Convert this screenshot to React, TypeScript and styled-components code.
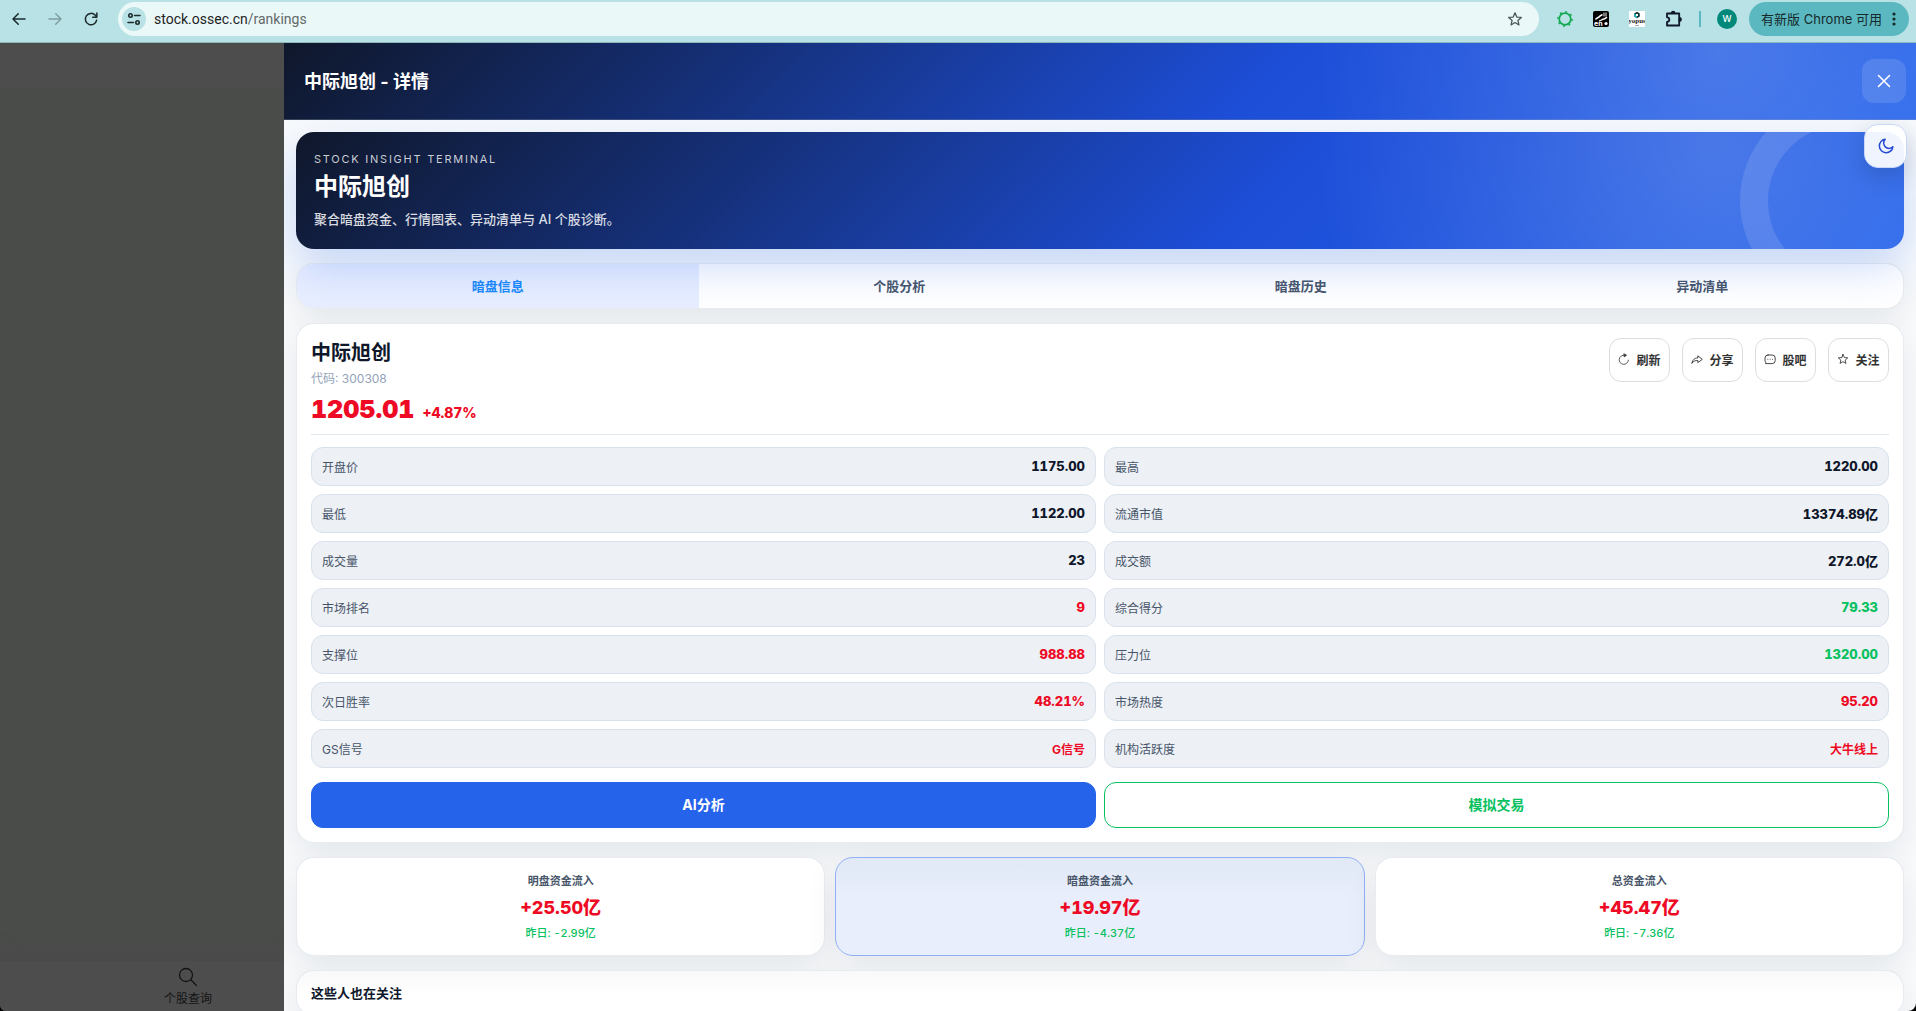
import React from "react";
import styled, { createGlobalStyle, css } from "styled-components";

const ui = `Inter, "Noto Sans CJK SC", sans-serif`;

const Global = createGlobalStyle`
  *, *::after { box-sizing: border-box; }
  html, body, #root { height: 100%; }
  body { margin: 0; font-family: ${ui}; color: #0f172a; overflow: hidden; background: #000; }
  button, input { font-family: inherit; }
  button { cursor: pointer; }
  svg { display: block; flex: none; }
  h1, h2, h3, p, dl, dd, dt { margin: 0; }
`;

const Window = styled.div`
  display: flex;
  flex-direction: column;
  height: 100vh;
`;

/* ---------- browser bar ---------- */

const Toolbar = styled.header`
  display: flex;
  align-items: center;
  height: 43px;
  padding: 2px 7px 7px 10px;
  background: #b8e2e5;
  border-bottom: 1px solid #8fb8ba;
`;

const ToolButton = styled.button<{ $dim?: boolean }>`
  display: grid;
  place-items: center;
  width: 18px;
  height: 18px;
  margin-right: 18px;
  padding: 0;
  border: 0;
  background: none;
  color: ${(p) => (p.$dim ? "#7f9fa2" : "#1d2b2c")};
`;

const AddressBar = styled.div`
  display: flex;
  flex: 1;
  align-items: center;
  height: 34px;
  margin-right: 18px;
  padding: 0 16px 0 4px;
  border-radius: 17px;
  background: #ebf8f8;
  color: #4a5556;
`;

const SiteInfo = styled.span`
  display: grid;
  place-items: center;
  width: 24px;
  height: 24px;
  border-radius: 50%;
  background: #b8e2e5;
  color: #1d2b2c;
`;

const Address = styled.span`
  flex: 1;
  margin-left: 8px;
  font: 14px/20px Roboto, sans-serif;
  color: #62696a;

  b {
    font-weight: 400;
    color: #1d2324;
  }
`;

const Extensions = styled.div`
  display: flex;
  align-items: center;
  gap: 20px;
  margin-right: 12px;
`;

const Divider = styled.span`
  width: 2px;
  height: 16px;
  margin: 0 -4px;
  background: #5bb8c0;
`;

const Avatar = styled.span`
  display: grid;
  place-items: center;
  width: 20px;
  height: 20px;
  border-radius: 50%;
  background: #00897b;
  color: #fff;
  font-size: 9px;
  font-weight: 500;
`;

const UpdateButton = styled.button`
  display: flex;
  align-items: center;
  gap: 6px;
  height: 34px;
  padding: 0 9px 0 12px;
  border: 0;
  border-radius: 17px;
  background: #5bb8c0;
  color: #16292b;
  font-size: 13px;
  white-space: nowrap;
`;

/* ---------- page ---------- */

const Viewport = styled.div`
  display: flex;
  flex: 1;
  min-height: 0;
  border-radius: 0 0 8px 6px;
  overflow: hidden;
`;

const Backdrop = styled.aside`
  display: flex;
  flex-direction: column;
  justify-content: flex-end;
  width: 284px;
  padding-top: 45px;
  background: linear-gradient(#4d4d4d 45px, #4a4c4a 45px);
`;

const BottomNav = styled.nav`
  display: flex;
  justify-content: flex-end;
  height: 50px;
  padding: 6px 72px 0;
  background: #4d4d4d;
  box-shadow: 0 -6px 20px rgba(76, 73, 76, 0.8);
`;

const NavLink = styled.a`
  display: flex;
  flex-direction: column;
  align-items: center;
  gap: 3px;
  color: #141414;
  font-size: 12px;
  line-height: 18px;
  text-decoration: none;
`;

const Drawer = styled.main`
  display: flex;
  flex: 1;
  flex-direction: column;
  min-width: 0;
  background: #f8fafc;
`;

const heroPaint = css`
  background:
    radial-gradient(circle at 88% 12%, rgba(255, 255, 255, 0.18), transparent 28%),
    linear-gradient(135deg, #0f172a 0%, #1d4ed8 60%, #2563eb 100%);
  color: #fff;
`;

const DrawerHeader = styled.div`
  display: flex;
  align-items: center;
  justify-content: space-between;
  height: 77px;
  padding: 0 10px 0 20px;
  border-bottom: 1px solid rgba(148, 163, 184, 0.3);
  ${heroPaint}
`;

const DrawerTitle = styled.h2`
  padding-top: 2px;
  font-size: 18px;
  line-height: 28px;
  font-weight: 700;
`;

const CloseButton = styled.button`
  display: grid;
  place-items: center;
  width: 44px;
  height: 44px;
  padding: 0;
  border: 0;
  border-radius: 12px;
  background: rgba(255, 255, 255, 0.12);
  color: #fff;
`;

const Content = styled.div`
  display: flex;
  flex-direction: column;
  gap: 14px;
  flex: 1;
  min-height: 0;
  padding: 12px;
  overflow: hidden;

  > * { flex: none; }
`;

const Hero = styled.section`
  position: relative;
  height: 117px;
  padding: 19px 18px;
  border-radius: 18px;
  box-shadow: 0 18px 44px rgba(37, 99, 235, 0.24);
  ${heroPaint}
`;

const HeroClip = styled.div`
  position: absolute;
  inset: 0;
  border-radius: inherit;
  overflow: hidden;
  pointer-events: none;

  &::after {
    content: "";
    position: absolute;
    top: -35px;
    right: -44px;
    width: 208px;
    height: 208px;
    border: 28px solid rgba(255, 255, 255, 0.12);
    border-radius: 50%;
  }
`;

const Eyebrow = styled.p`
  font-size: 11px;
  line-height: 16px;
  letter-spacing: 0.16em;
  color: rgba(255, 255, 255, 0.78);
`;

const HeroTitle = styled.h1`
  margin-top: 4px;
  font-size: 24px;
  line-height: 32px;
  font-weight: 700;
`;

const HeroText = styled.p`
  margin-top: 6px;
  font-size: 13px;
  line-height: 20px;
  font-weight: 500;
  color: rgba(255, 255, 255, 0.85);
`;

const ThemeButton = styled.button`
  position: absolute;
  top: -8px;
  right: -3px;
  display: grid;
  place-items: center;
  width: 43px;
  height: 44px;
  padding: 0;
  border: 1px solid #c9d8fa;
  border-radius: 14px;
  background: rgba(255, 255, 255, 0.92);
  box-shadow: 0 8px 22px rgba(15, 23, 42, 0.18);
  color: #2549d3;
`;

const cardEdge = css`
  border: 1px solid rgba(148, 163, 184, 0.22);
  border-radius: 18px;
  box-shadow: 0 12px 32px rgba(15, 23, 42, 0.08);
`;

const Tabs = styled.div`
  display: grid;
  grid-template-columns: repeat(4, 1fr);
  height: 46px;
  overflow: hidden;
  background: #fff;
  ${cardEdge}
`;

const Tab = styled.button<{ $active?: boolean }>`
  padding: 0 0 2px;
  border: 0;
  background: ${(p) => (p.$active ? "#e8eeff" : "none")};
  color: ${(p) => (p.$active ? "#1989fa" : "#475569")};
  font-size: 13px;
  font-weight: 700;
`;

const Card = styled.section<{ $shaded?: boolean }>`
  padding: 14px;
  background: ${(p) => (p.$shaded ? "linear-gradient(#f9f9fb, #fff 26px)" : "#fff")};
  ${cardEdge}
`;

const StockHead = styled.div`
  display: flex;
  align-items: flex-start;
  justify-content: space-between;
  height: 97px;
  border-bottom: 1px solid #e2e8f0;
`;

const StockName = styled.h2`
  font-size: 20px;
  line-height: 30px;
  font-weight: 700;
`;

const Code = styled.p`
  font-size: 12px;
  line-height: 22px;
  color: #94a3b8;
`;

const Price = styled.p`
  display: flex;
  align-items: baseline;
  gap: 8px;
  color: #ee0a24;
  font-size: 14px;
  line-height: 38px;
  font-weight: 800;
  font-variant-numeric: tabular-nums;

  strong {
    font-size: 25px;
    font-weight: 900;
  }
`;

const Actions = styled.div`
  display: flex;
  gap: 12px;
`;

const ActionButton = styled.button`
  display: flex;
  align-items: center;
  justify-content: center;
  gap: 6px;
  width: 61px;
  height: 44px;
  padding: 0 0 2px;
  border: 1px solid #dcdee0;
  border-radius: 12px;
  background: #fff;
  color: #323233;
  font-size: 12px;
  font-weight: 700;
`;

const StatGrid = styled.dl`
  display: grid;
  grid-template-columns: 1fr 1fr;
  gap: 8px;
  margin-top: 12px;
`;

type Tone = "ink" | "up" | "down";
const tones: Record<Tone, string> = { ink: "#0f172a", up: "#ee0a24", down: "#07c160" };

const Stat = styled.div<{ $tone: Tone; $word: boolean }>`
  display: flex;
  align-items: center;
  justify-content: space-between;
  height: 39px;
  padding: 0 10px 1px;
  border: 1px solid #d9e2ec;
  border-radius: 12px;
  background: #edf0f5;
  font-size: 12px;

  dt { color: #475569; }
  dd {
    color: ${(p) => tones[p.$tone]};
    font-size: ${(p) => (p.$word ? "12px" : "13px")};
    font-weight: ${(p) => (p.$word ? 700 : 800)};
    font-variant-numeric: tabular-nums;
  }
`;

const ButtonRow = styled.div`
  display: grid;
  grid-template-columns: 1fr 1fr;
  gap: 8px;
  margin-top: 14px;
`;

const MainButton = styled.button<{ $outline?: boolean }>`
  height: 46px;
  padding: 0 0 2px;
  border: 1px solid ${(p) => (p.$outline ? "#07c160" : "#2563eb")};
  border-radius: 12px;
  background: ${(p) => (p.$outline ? "#fff" : "#2563eb")};
  color: ${(p) => (p.$outline ? "#07c160" : "#fff")};
  font-size: 14px;
  font-weight: 700;
`;

const FlowRow = styled.div`
  display: grid;
  grid-template-columns: repeat(3, 1fr);
  gap: 10px;
`;

const Flow = styled.section<{ $active?: boolean }>`
  display: flex;
  flex-direction: column;
  align-items: center;
  height: 99px;
  padding: 14px 0;
  background: #fff;
  ${cardEdge}
  ${(p) =>
    p.$active &&
    css`
      background: linear-gradient(#e1e8f6, #e8eefb 40%);
      border-color: #8fb0f5;
    `}

  h3 {
    font-size: 11px;
    line-height: 18px;
    font-weight: 600;
    color: #475569;
  }
  strong {
    margin: 5px 0;
    font-size: 18px;
    line-height: 26px;
    font-weight: 800;
    font-variant-numeric: tabular-nums;
    color: #ee0a24;
  }
  p {
    font-size: 11px;
    line-height: 14px;
    font-weight: 500;
    font-variant-numeric: tabular-nums;
    color: #07c160;
  }
`;

const CardTitle = styled.h3`
  font-size: 13px;
  line-height: 16px;
  font-weight: 700;
`;

/* ---------- icons ---------- */

type IconProps = { size?: number; width?: number; children: React.ReactNode; box?: number };
const Icon = ({ size = 16, width = 2, box = 24, children }: IconProps) => (
  <svg width={size} height={size} viewBox={`0 0 ${box} ${box}`} fill="none" stroke="currentColor"
    strokeWidth={width} strokeLinecap="round" strokeLinejoin="round" aria-hidden="true">
    {children}
  </svg>
);

const BackIcon = () => <Icon size={18}><path d="M20 12H5M11 5l-7 7 7 7" /></Icon>;
const ForwardIcon = () => <Icon size={18}><path d="M4 12h15M13 5l7 7-7 7" /></Icon>;
const ReloadIcon = () => (
  <Icon size={18}><path d="M19.5 13.5A7.6 7.6 0 1 1 17.5 6.8L19.5 9M19.8 4v5.5h-5.5" /></Icon>
);
const TuneIcon = () => (
  <Icon size={14} box={14} width={1.6}>
    <circle cx="3.5" cy="3.5" r="1.7" /><path d="M7.5 3.5H13M1 10.5h5.5" /><circle cx="10.5" cy="10.5" r="1.7" />
  </Icon>
);
const StarIcon = ({ size, width }: { size: number; width: number }) => (
  <Icon size={size} width={width}>
    <path d="M12 2.800l2.700 6.300 6.800.6-5.200 4.500 1.600 6.700-5.900-3.600-5.900 3.600 1.600-6.700-5.200-4.500 6.800-.6z" />
  </Icon>
);
const GearIcon = () => (
  <svg width="16" height="16" viewBox="0 0 16 16" fill="none" stroke="#12a84f" aria-hidden="true">
    <circle cx="8" cy="8" r="5.8" strokeWidth="1.8" />
    <circle cx="8" cy="8" r="7.2" strokeWidth="1.4" strokeDasharray="1.9 3.755" />
  </svg>
);
const TranslateIcon = () => (
  <svg width="16" height="16" viewBox="0 0 16 16" aria-hidden="true">
    <rect width="16" height="16" rx="2" fill="#000" />
    <path d="M2.5 8.5c1-2 3-1.500 4-3s2-1 3-2M6 10c2 0 3-2 5-2 1 0 2-1 3-2" fill="none" stroke="#fff" strokeWidth="1.5" />
    <rect x="10" y="1.5" width="4" height="4" fill="#777" />
    <circle cx="13" cy="12.5" r="1.6" fill="#fff" />
    <text x="1" y="15" fontSize="7" fontWeight="700" fill="#fff" fontFamily="Inter, sans-serif">en</text>
  </svg>
);
const YapasIcon = () => (
  <svg width="16" height="16" viewBox="0 0 16 16" aria-hidden="true">
    <rect width="16" height="16" fill="#fff" />
    <path d="M8 .8l2.800 1.600v3.200L8 7.200 5.200 5.600V2.400z" fill="#16323a" />
    <path d="M5.200 2.400L8 4v3.200L5.200 5.600z" fill="#27b3b5" />
    <path d="M7 3h2v2H7z" fill="#fff" />
    <text x="8" y="12" fontSize="7" fontWeight="700" textAnchor="middle" fill="#222" fontFamily="Liberation Serif, serif">yopus</text>
    <path d="M6 14.500h4" stroke="#aaa" />
  </svg>
);
const PuzzleIcon = () => (
  <Icon size={18} box={18} width={1.8}>
    <path d="M2 3.500H14.200V15.500H2v-3.600a2.300 2.300 0 0 0 0-4.600z" />
    <path d="M6.600 3.200a1.500 1.500 0 0 1 3 0zM14.500 8a1.500 1.500 0 0 1 0 3z" fill="currentColor" />
  </Icon>
);
const DotsIcon = () => (
  <svg width="12" height="14" viewBox="0 0 12 14" fill="currentColor" aria-hidden="true">
    <circle cx="6" cy="2" r="1.6" /><circle cx="6" cy="7" r="1.6" /><circle cx="6" cy="12" r="1.6" />
  </svg>
);
const CrossIcon = () => <Icon size={14} box={14} width={1.6}><path d="M1.500 1.500l11 11M12.500 1.500l-11 11" /></Icon>;
const MoonIcon = () => (
  <Icon size={16} box={16} width={1.5}>
    <path d="M7.200 1.200A6.800 6.800 0 1 0 14.900 8.800 5 5 0 0 1 7.200 1.200z" />
  </Icon>
);
const SearchIcon = () => (
  <Icon size={20} box={20} width={1.3}><circle cx="8" cy="8" r="6.5" /><path d="M12.800 12.800L18.500 18.500" /></Icon>
);
const RefreshIcon = () => (
  <Icon size={12} box={12} width={0.8}>
    <path d="M10.400 7.200A4.600 4.600 0 1 1 6.500 2.200" /><path d="M6.200 .9L8.500 2.200 6.500 3.700z" fill="currentColor" />
  </Icon>
);
const ShareIcon = () => (
  <Icon size={12} box={12} width={0.9}>
    <path d="M1 10c.5-3.500 2.800-5 5.800-5V2.800L11.300 6.400 6.800 9.600V7.500C4.500 7.300 2.500 8.200 1 10z" />
  </Icon>
);
const ChatIcon = () => (
  <Icon size={12} box={12} width={0.9}>
    <path d="M4 2h4.200a3 3 0 0 1 3 3v2.600a3 3 0 0 1-3 3H1.600c.4-.6.3-1 0-1.600A3 3 0 0 1 1 7.500V5a3 3 0 0 1 3-3z" />
    <path d="M3.800 6.300h.1M6.100 6.300h.1M8.400 6.300h.1" />
  </Icon>
);

/* ---------- data ---------- */

const stats: [string, string, Tone][] = [
  ["开盘价", "1175.00", "ink"],
  ["最高", "1220.00", "ink"],
  ["最低", "1122.00", "ink"],
  ["流通市值", "13374.89亿", "ink"],
  ["成交量", "23", "ink"],
  ["成交额", "272.0亿", "ink"],
  ["市场排名", "9", "up"],
  ["综合得分", "79.33", "down"],
  ["支撑位", "988.88", "up"],
  ["压力位", "1320.00", "down"],
  ["次日胜率", "48.21%", "up"],
  ["市场热度", "95.20", "up"],
  ["GS信号", "G信号", "up"],
  ["机构活跃度", "大牛线上", "up"],
];

const flows = [
  { name: "明盘资金流入", value: "+25.50亿", before: "昨日: -2.99亿" },
  { name: "暗盘资金流入", value: "+19.97亿", before: "昨日: -4.37亿" },
  { name: "总资金流入", value: "+45.47亿", before: "昨日: -7.36亿" },
];

const tabs = ["暗盘信息", "个股分析", "暗盘历史", "异动清单"];

export default function App() {
  const [tab, setTab] = React.useState(0);
  return (
    <Window>
      <Global />
      <Toolbar>
        <ToolButton aria-label="后退"><BackIcon /></ToolButton>
        <ToolButton aria-label="前进" $dim><ForwardIcon /></ToolButton>
        <ToolButton aria-label="重新加载"><ReloadIcon /></ToolButton>
        <AddressBar>
          <SiteInfo><TuneIcon /></SiteInfo>
          <Address><b>stock.ossec.cn</b>/rankings</Address>
          <StarIcon size={16} width={1.9} />
        </AddressBar>
        <Extensions>
          <GearIcon />
          <TranslateIcon />
          <YapasIcon />
          <PuzzleIcon />
          <Divider />
          <Avatar>W</Avatar>
        </Extensions>
        <UpdateButton>有新版 Chrome 可用<DotsIcon /></UpdateButton>
      </Toolbar>
      <Viewport>
        <Backdrop>
          <BottomNav>
            <NavLink href="#search"><SearchIcon />个股查询</NavLink>
          </BottomNav>
        </Backdrop>
        <Drawer>
          <DrawerHeader>
            <DrawerTitle>中际旭创 - 详情</DrawerTitle>
            <CloseButton aria-label="关闭"><CrossIcon /></CloseButton>
          </DrawerHeader>
          <Content>
            <Hero>
              <HeroClip />
              <Eyebrow>STOCK INSIGHT TERMINAL</Eyebrow>
              <HeroTitle>中际旭创</HeroTitle>
              <HeroText>聚合暗盘资金、行情图表、异动清单与 AI 个股诊断。</HeroText>
              <ThemeButton aria-label="深色模式"><MoonIcon /></ThemeButton>
            </Hero>
            <Tabs role="tablist">
              {tabs.map((name, i) => (
                <Tab key={name} role="tab" aria-selected={i === tab} $active={i === tab} onClick={() => setTab(i)}>
                  {name}
                </Tab>
              ))}
            </Tabs>
            <Card>
              <StockHead>
                <div>
                  <StockName>中际旭创</StockName>
                  <Code>代码: 300308</Code>
                  <Price><strong>1205.01</strong>+4.87%</Price>
                </div>
                <Actions>
                  <ActionButton><RefreshIcon />刷新</ActionButton>
                  <ActionButton><ShareIcon />分享</ActionButton>
                  <ActionButton><ChatIcon />股吧</ActionButton>
                  <ActionButton><StarIcon size={12} width={1.7} />关注</ActionButton>
                </Actions>
              </StockHead>
              <StatGrid>
                {stats.map(([label, value, tone]) => (
                  <Stat key={label} $tone={tone} $word={!/\d/.test(value)}>
                    <dt>{label}</dt>
                    <dd>{value}</dd>
                  </Stat>
                ))}
              </StatGrid>
              <ButtonRow>
                <MainButton>AI分析</MainButton>
                <MainButton $outline>模拟交易</MainButton>
              </ButtonRow>
            </Card>
            <FlowRow>
              {flows.map((f, i) => (
                <Flow key={f.name} $active={i === 1}>
                  <h3>{f.name}</h3>
                  <strong>{f.value}</strong>
                  <p>{f.before}</p>
                </Flow>
              ))}
            </FlowRow>
            <Card $shaded>
              <CardTitle>这些人也在关注</CardTitle>
            </Card>
          </Content>
        </Drawer>
      </Viewport>
    </Window>
  );
}
